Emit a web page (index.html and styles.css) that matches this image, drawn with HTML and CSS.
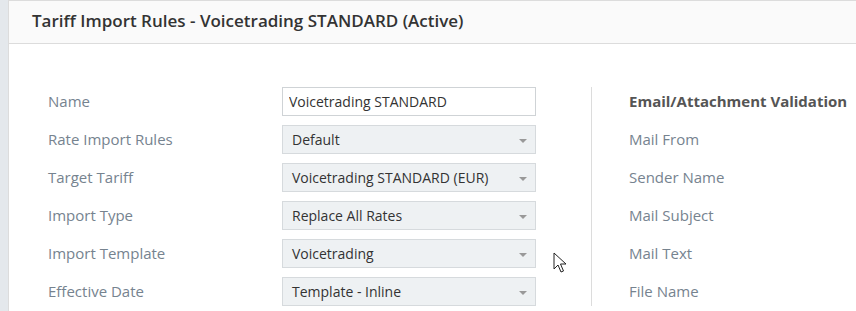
FILE: index.html
```html
<!DOCTYPE html>
<html>

<head>
    <link rel="stylesheet" href="styles.css">
</head>

<body>
    <div class="page">
        <div class="panel">
            <div class="panel-heading">Tariff Import Rules - Voicetrading STANDARD (Active)</div>
            <div class="panel-body">
                <div class="col-left">
                    <div class="row">
                        <label class="lbl">Name</label>
                        <input class="field" type="text" value="Voicetrading STANDARD">
                    </div>
                    <div class="row">
                        <label class="lbl">Rate Import Rules</label>
                        <div class="select">Default<span class="caret"></span></div>
                    </div>
                    <div class="row">
                        <label class="lbl">Target Tariff</label>
                        <div class="select">Voicetrading STANDARD (EUR)<span class="caret"></span></div>
                    </div>
                    <div class="row">
                        <label class="lbl">Import Type</label>
                        <div class="select">Replace All Rates<span class="caret"></span></div>
                    </div>
                    <div class="row">
                        <label class="lbl">Import Template</label>
                        <div class="select">Voicetrading<span class="caret"></span></div>
                    </div>
                    <div class="row">
                        <label class="lbl">Effective Date</label>
                        <div class="select">Template - Inline<span class="caret"></span></div>
                    </div>
                </div>
                <div class="col-right">
                    <div class="row"><span class="section-title">Email/Attachment Validation</span></div>
                    <div class="row"><label class="lbl">Mail From</label></div>
                    <div class="row"><label class="lbl">Sender Name</label></div>
                    <div class="row"><label class="lbl">Mail Subject</label></div>
                    <div class="row"><label class="lbl">Mail Text</label></div>
                    <div class="row"><label class="lbl">File Name</label></div>
                </div>
            </div>
        </div>
    </div>

    <svg class="cursor" width="14" height="22" viewBox="0 0 14 22">
        <path d="M1 1 L1 17 L5 13 L8 20 L10.5 19 L7.5 12 L13 12 Z" fill="#fff" stroke="#222" stroke-width="1" stroke-linejoin="round"/>
    </svg>
</body>

</html>
```

FILE: styles.css
```css
body {
    margin: 0;
    background: #e4e8ec;
    font-family: 'Open Sans', 'Segoe UI', sans-serif;
    font-size: 15px;
    color: #333;
    height: 311px;
    overflow: hidden;
}

.page {
    padding-left: 8px;
}

.panel {
    background: #fff;
    border-left: 1px solid #dcdcdc;
    border-top: 1px solid #dcdcdc;
    height: 310px;
}

.panel-heading {
    height: 42px;
    line-height: 40px;
    padding-left: 23px;
    background: #fafafa;
    border-bottom: 1px solid #dcdcdc;
    font-size: 17px;
    font-weight: 600;
    color: #333;
}

.panel-body {
    display: flex;
    padding: 43px 0 0 39px;
}

.col-left {
    display: flex;
    flex-direction: column;
    gap: 9px;
    width: 488px;
}

.col-right {
    display: flex;
    flex-direction: column;
    gap: 9px;
    margin-left: 55px;
    padding-left: 37px;
    border-left: 1px solid #dcdcdc;
    flex: 1;
}

.row {
    display: flex;
    align-items: center;
    height: 29px;
}

.lbl {
    width: 234px;
    margin-top: -2px;
    color: #76838f;
}

.section-title {
    margin-top: -2px;
    font-weight: 700;
    color: #555;
}

.field,
.select {
    box-sizing: border-box;
    width: 254px;
    height: 29px;
    font-family: 'Open Sans', 'Segoe UI', sans-serif;
    font-size: 14px;
    color: #333;
}

.field {
    border: 1px solid #cfd3d6;
    padding: 0 6px;
    outline: none;
}

.select {
    position: relative;
    display: flex;
    align-items: center;
    padding-left: 9px;
    background: #eef1f3;
    border: 1px solid #d6dadd;
}

.caret {
    position: absolute;
    right: 8px;
    top: 13px;
    border-left: 4px solid transparent;
    border-right: 4px solid transparent;
    border-top: 4px solid #999;
}

.cursor {
    position: absolute;
    left: 553px;
    top: 252px;
}
```
